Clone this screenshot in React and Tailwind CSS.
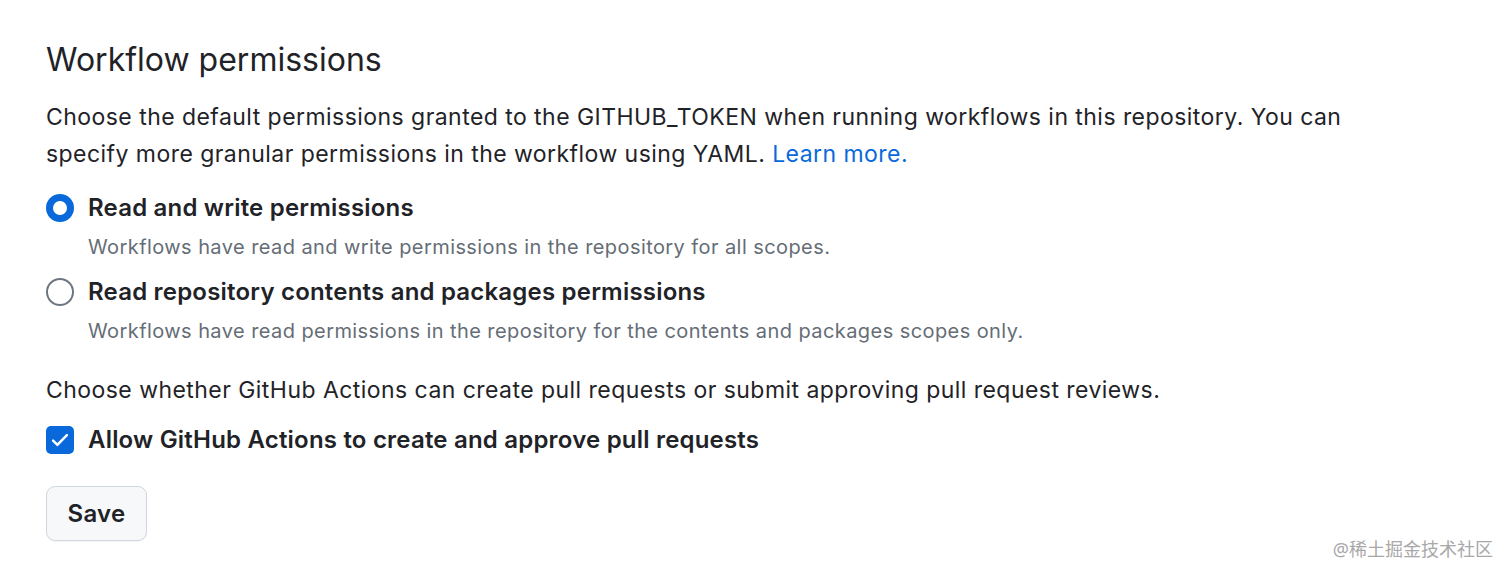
import { useState } from 'react';

function Radio({ checked }) {
  return (
    <span
      className={
        'flex h-[28px] w-[28px] shrink-0 items-center justify-center rounded-full ' +
        (checked ? 'border-[7px] border-[#0969da] bg-white' : 'border-[2px] border-[#6e7781] bg-white')
      }
    />
  );
}

function Checkbox({ checked }) {
  return (
    <span className="flex h-[28px] w-[28px] shrink-0 items-center justify-center rounded-[5px] bg-[#0969da]">
      {checked && (
        <svg width="22" height="22" viewBox="0 0 16 16" fill="none">
          <path d="M3 8.4l3.1 3.1 6.9-7" stroke="white" strokeWidth="1.8" strokeLinecap="round" strokeLinejoin="round" />
        </svg>
      )}
    </span>
  );
}

export default function App() {
  const [mode, setMode] = useState('write');
  const [allow, setAllow] = useState(true);

  return (
    <div className="relative h-[581px] w-[1512px] bg-white text-[#1f2328]" style={{ fontFamily: 'Inter, "Noto Sans", sans-serif' }}>
      <div className="px-[46px] pt-[38px]">
        <h2 className="text-[32px] leading-[44px] font-normal">Workflow permissions</h2>
        <p className="mt-[17px] w-[1330px] text-[23px] leading-[37px] tracking-[0.45px]">
          Choose the default permissions granted to the GITHUB_TOKEN when running workflows in this repository. You can{' '}
          specify more granular permissions in the workflow using YAML.{' '}
          <a className="text-[#0969da]" href="#">Learn more.</a>
        </p>

        <div className="mt-[19px] flex flex-col">
          <label className="flex cursor-pointer items-center gap-[14px]" onClick={() => setMode('write')}>
            <Radio checked={mode === 'write'} />
            <span className="text-[24px] leading-[32px] font-semibold tracking-[0.2px]">Read and write permissions</span>
          </label>
          <p className="mt-[7px] pl-[42px] text-[20px] leading-[32px] tracking-[0.42px] text-[#656d76]">
            Workflows have read and write permissions in the repository for all scopes.
          </p>
          <label className="mt-[13px] flex cursor-pointer items-center gap-[14px]" onClick={() => setMode('read')}>
            <Radio checked={mode === 'read'} />
            <span className="text-[24px] leading-[32px] font-semibold tracking-[0.2px]">Read repository contents and packages permissions</span>
          </label>
          <p className="mt-[7px] pl-[42px] text-[20px] leading-[32px] tracking-[0.42px] text-[#656d76]">
            Workflows have read permissions in the repository for the contents and packages scopes only.
          </p>
        </div>

        <p className="mt-[25px] text-[23px] leading-[37px] tracking-[0.45px]">
          Choose whether GitHub Actions can create pull requests or submit approving pull request reviews.
        </p>
        <label className="mt-[15px] flex cursor-pointer items-center gap-[14px]" onClick={() => setAllow(!allow)}>
          <Checkbox checked={allow} />
          <span className="text-[24px] leading-[32px] font-semibold tracking-[0.2px]">Allow GitHub Actions to create and approve pull requests</span>
        </label>

        <button className="mt-[30px] h-[55px] w-[101px] rounded-[9px] border border-[#d0d7de] bg-[#f6f8fa] text-[24px] font-semibold tracking-[0.25px] shadow-[0_1px_0_rgba(31,35,40,0.04)]">
          Save
        </button>
      </div>
      <div
        className="absolute bottom-[18px] right-[19px] text-[18px] text-[#a8a8a8]"
        style={{ fontFamily: '"Noto Sans", "Noto Sans CJK SC", sans-serif' }}
      >
        @稀土掘金技术社区
      </div>
    </div>
  );
}
